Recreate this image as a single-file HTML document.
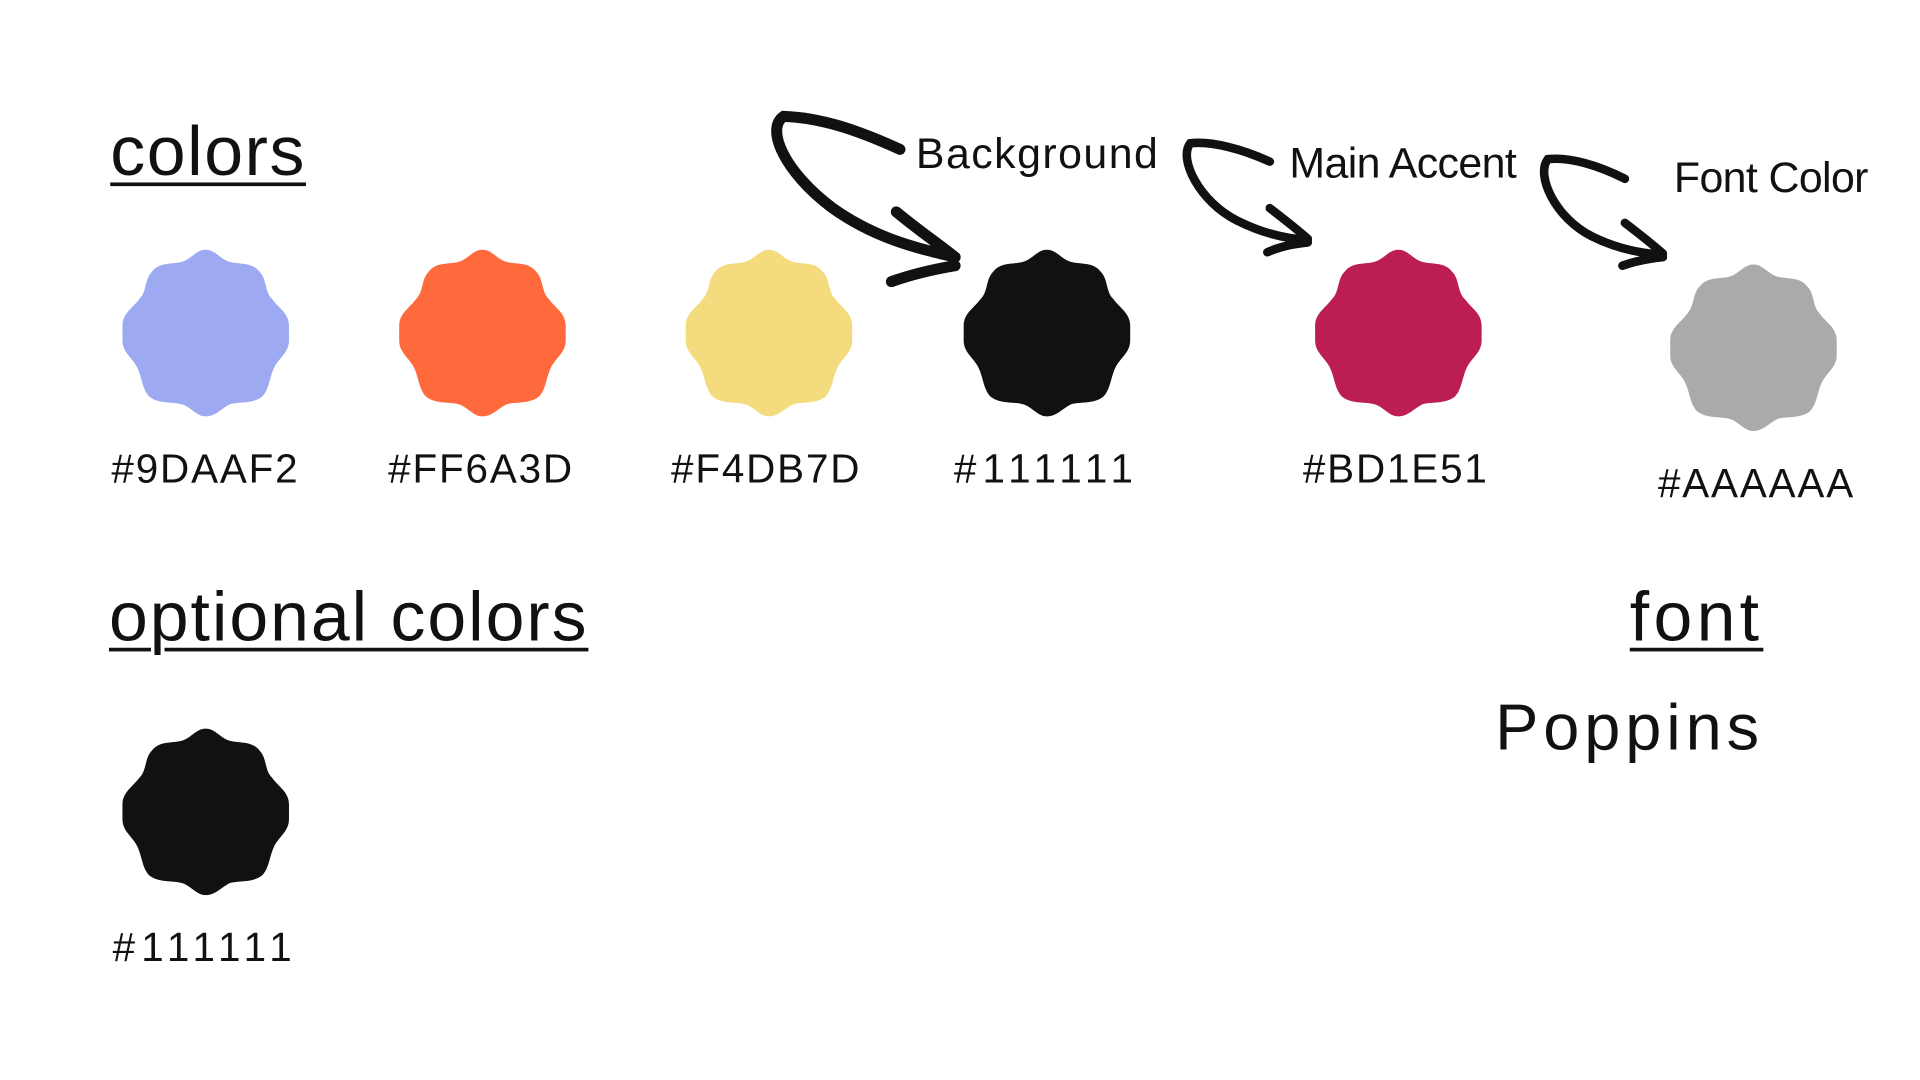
<!DOCTYPE html>
<html><head><meta charset="utf-8"><style>
html,body{margin:0;padding:0;background:#fff;width:1920px;height:1080px;overflow:hidden}
#w{position:absolute;left:0;top:0;width:1568px;height:882px;transform:scale(1.22449);transform-origin:0 0}
.t{position:absolute;font-family:"Liberation Sans",sans-serif;color:#111;white-space:nowrap;line-height:1}
.h{font-size:57px;text-decoration:underline;text-decoration-thickness:3px;text-underline-offset:6px}
.hex{font-size:33px;letter-spacing:1.5px}
.lab{font-size:35px;font-weight:300;letter-spacing:-0.5px}
svg{position:absolute;left:0;top:0}
</style></head><body><div id="w">
<svg width="1568" height="882" viewBox="0 0 1568 882">
<defs><path id="f" d="M0,-68 C8,-68 12,-60 20,-58 C28,-56 38,-58 44,-50 C50,-44 48,-34 54,-28 C60,-20 68,-16 68,-6 L68,6 C68,16 60,20 56,28 C52,36 52,46 46,52 C38,58 28,56 20,58 C12,62 8,68 0,68 C-8,68 -12,60 -20,58 C-28,56 -38,58 -46,52 C-52,46 -52,36 -56,28 C-60,20 -68,16 -68,6 L-68,-6 C-68,-16 -60,-20 -54,-28 C-48,-34 -50,-44 -44,-50 C-38,-58 -28,-56 -20,-58 C-12,-60 -8,-68 0,-68Z"/></defs>
<use href="#f" x="168" y="272" fill="#9DAAF2"/>
<use href="#f" x="394" y="272" fill="#FF6A3D"/>
<use href="#f" x="628" y="272" fill="#F4DB7D"/>
<use href="#f" x="855" y="272" fill="#111111"/>
<use href="#f" x="1142" y="272" fill="#BD1E51"/>
<use href="#f" x="1432" y="284" fill="#AAAAAA"/>
<use href="#f" x="168" y="663" fill="#111111"/>
<g fill="none" stroke="#111" stroke-linecap="round" stroke-width="9">
<path d="M735,122 C700,106 670,96 640,95 C625,105 640,140 680,170 C715,195 750,203 780,210"/>
<path d="M732,173 C750,188 765,198 780,210 M728,230 C745,224 762,220 780,217"/>
<path d="M1037,132 C1015,122 990,115 972,117 C962,130 980,165 1010,180 C1030,190 1050,195 1068,196" stroke-width="7"/>
<path d="M1037,170 C1050,180 1060,188 1068,195 M1035,206 C1046,201 1058,199 1068,198" stroke-width="7"/>
<path d="M1327,146 C1305,135 1282,128 1264,130 C1254,143 1270,178 1300,193 C1320,203 1340,207 1358,208" stroke-width="7"/>
<path d="M1327,182 C1340,192 1350,200 1358,207 M1325,217 C1336,213 1348,211 1358,210" stroke-width="7"/>
</g>
</svg>
<div class="t h" style="left:90px;top:96px;letter-spacing:1.3px">colors</div>
<div class="t h" style="left:89px;top:476px;letter-spacing:1.6px">optional colors</div>
<div class="t h" style="left:1331px;top:476px;letter-spacing:3.5px">font</div>
<div class="t" style="left:1221px;top:568px;font-size:53px;letter-spacing:4px">Poppins</div>
<div class="t hex" style="left:91px;top:366px">#9DAAF2</div>
<div class="t hex" style="left:317px;top:366px">#FF6A3D</div>
<div class="t hex" style="left:548px;top:366px">#F4DB7D</div>
<div class="t hex" style="left:779px;top:366px;letter-spacing:5px">#111111</div>
<div class="t hex" style="left:1064px;top:366px">#BD1E51</div>
<div class="t hex" style="left:1354px;top:378px">#AAAAAA</div>
<div class="t hex" style="left:92px;top:757px;letter-spacing:5px">#111111</div>
<div class="t lab" style="left:748px;top:108px;letter-spacing:1.2px">Background</div>
<div class="t lab" style="left:1053px;top:116px">Main Accent</div>
<div class="t lab" style="left:1367px;top:128px">Font Color</div>
</div></body></html>
